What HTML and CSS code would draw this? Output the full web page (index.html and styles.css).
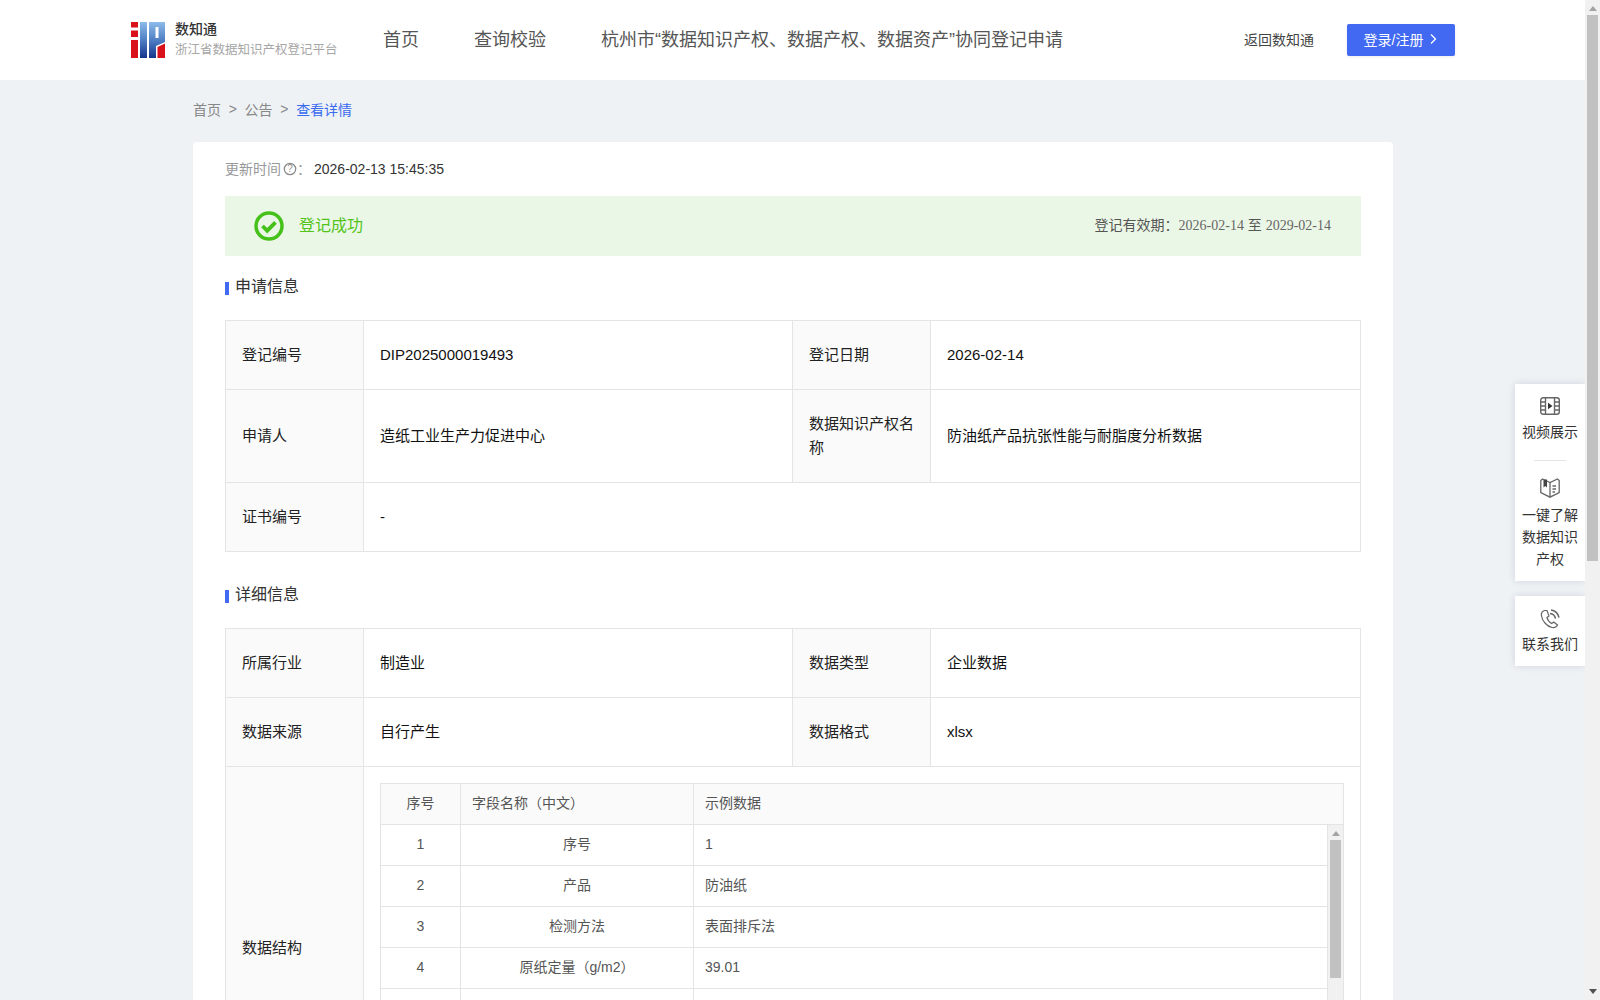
FILE: index.html
```html
<!DOCTYPE html>
<html lang="zh-CN">
<head>
<meta charset="utf-8">
<title>数知通</title>
<link rel="stylesheet" href="styles.css">
</head>
<body>
<div class="viewport">
  <header class="topbar">
    <div class="brand">
      <svg class="logo" viewBox="0 0 34 36" width="34" height="36">
        <defs><linearGradient id="lg" x1="0" y1="0" x2="0" y2="1"><stop offset="0" stop-color="#8dbbea"/><stop offset=".5" stop-color="#4f7fc4"/><stop offset="1" stop-color="#16348c"/></linearGradient></defs>
        <path fill="#d8111b" d="M0 0h7v5.500H0zM0 8.500h7v6.500H0zM0 18h7v18H0z"/>
        <path fill="url(#lg)" d="M9 0h7v36H9zM18 0h16v20l-9 4v12h-7z"/>
        <path fill="#fff" d="M24.500 5h3v11h-3z"/>
        <path fill="#d8111b" d="M26.500 25L34 21.500V36h-7.500z"/>
      </svg>
      <div class="brand-text">
        <div class="brand-name">数知通</div>
        <div class="brand-sub">浙江省数据知识产权登记平台</div>
      </div>
    </div>
    <nav class="nav">
      <a>首页</a>
      <a>查询校验</a>
      <a>杭州市“数据知识产权、数据产权、数据资产”协同登记申请</a>
    </nav>
    <a class="back">返回数知通</a>
    <button class="login"><span>登录/注册</span><svg viewBox="0 0 10 12" width="10" height="12"><path d="M3 1.500L7.500 6 3 10.500" fill="none" stroke="#fff" stroke-width="1.300"/></svg></button>
  </header>

  <main class="wrap">
    <div class="crumbs"><span>首页</span><i>&gt;</i><span>公告</span><i>&gt;</i><span class="cur">查看详情</span></div>
    <section class="card">
      <div class="updated">
        <span class="u-label">更新时间</span>
        <svg viewBox="0 0 14 14" width="14" height="14"><circle cx="7" cy="7" r="5.700" fill="none" stroke="#8c8c8c" stroke-width="1.300"/><text x="7" y="10.300" text-anchor="middle" class="q">?</text></svg>
        <span class="u-label">：</span>
        <span class="u-value">2026-02-13 15:45:35</span>
      </div>
      <div class="banner">
        <svg viewBox="0 0 30 30" width="30" height="30"><circle cx="15" cy="15" r="13" fill="none" stroke="#45c11a" stroke-width="3.500"/><path d="M8.500 15l4.700 4.700 8.300-8.300" fill="none" stroke="#45c11a" stroke-width="3.800"/></svg>
        <span class="ok">登记成功</span>
        <span class="valid">登记有效期：<em>2026-02-14</em> 至 <em>2029-02-14</em></span>
      </div>

      <h3 class="sec sec-a">申请信息</h3>
      <div class="grid">
        <div class="th">登记编号</div><div class="td">DIP2025000019493</div><div class="th">登记日期</div><div class="td">2026-02-14</div>
        <div class="th">申请人</div><div class="td">造纸工业生产力促进中心</div><div class="th">数据知识产权名称</div><div class="td">防油纸产品抗张性能与耐脂度分析数据</div>
        <div class="th">证书编号</div><div class="td wide">-</div>
      </div>

      <h3 class="sec sec-b">详细信息</h3>
      <div class="grid">
        <div class="th">所属行业</div><div class="td">制造业</div><div class="th">数据类型</div><div class="td">企业数据</div>
        <div class="th">数据来源</div><div class="td">自行产生</div><div class="th">数据格式</div><div class="td">xlsx</div>
        <div class="th tall">数据结构</div>
        <div class="td wide nest">
          <div class="inner">
            <div class="row head"><div class="c1">序号</div><div class="c2 left">字段名称（中文）</div><div class="c3">示例数据</div></div>
            <div class="inner-body">
              <div class="rows">
                <div class="row"><div class="c1">1</div><div class="c2">序号</div><div class="c3">1</div></div>
                <div class="row"><div class="c1">2</div><div class="c2">产品</div><div class="c3">防油纸</div></div>
                <div class="row"><div class="c1">3</div><div class="c2">检测方法</div><div class="c3">表面排斥法</div></div>
                <div class="row"><div class="c1">4</div><div class="c2">原纸定量（g/m2）</div><div class="c3">39.01</div></div>
                <div class="row"><div class="c1"></div><div class="c2"></div><div class="c3"></div></div>
                <div class="row"><div class="c1"></div><div class="c2"></div><div class="c3"></div></div>
              </div>
              <div class="bar bar-inner"><b class="up"></b><b class="thumb"></b></div>
            </div>
          </div>
        </div>
      </div>
    </section>
  </main>

  <aside class="float">
    <div class="float-box">
      <div class="f-item">
        <svg viewBox="0 0 20 18" width="20" height="18" fill="none" stroke="#666" stroke-width="1.400"><rect x=".7" y=".7" width="18.600" height="16.600" rx="2.500"/><path d="M5.500.7v16.600M14.500.7v16.600M.7 5h4.800M.7 9h4.800M.7 13h4.800M14.500 5h4.800M14.500 9h4.800M14.500 13h4.800"/><path d="M8 5.700l4.500 3.300L8 12.300z" fill="#333" stroke="none"/></svg>
        <span>视频展示</span>
      </div>
      <hr>
      <div class="f-item">
        <svg viewBox="0 0 20 20" width="20" height="20" fill="none" stroke="#666" stroke-width="1.300"><path d="M2.500 1l7.500 3.500L17.500 1l1.700 1.500V14.500L10 19.200.8 14.500V2.500z"/><path d="M10 4.500v14.700M12.500 8h3.500M12.500 11h3.500M12.500 14h2.500"/><path d="M3.500 1.500h3.500v8l-1.700-1.500-1.800 1.500z" fill="#444" stroke="none"/></svg>
        <span>一键了解数据知识产权</span>
      </div>
    </div>
    <div class="float-box">
      <div class="f-item contact">
        <svg viewBox="0 0 20 20" width="20" height="20" fill="none" stroke="#666" stroke-width="1.200"><path d="M4.500 1.500C2.200 2.200 1 4.500 1.500 7c.8 5 5.500 10.500 10.500 11.500 2.500.5 4.500-.5 5.500-2.500l-3.800-3-2 1.500c-2-1-4-3.500-4.800-6L9 7 7 1.500z"/><path d="M10 4.500c2.800.3 5 2.400 5.500 5.200M11 1c4 .3 7.300 3.500 8 7.500" stroke-width="1.500"/></svg>
        <span>联系我们</span>
      </div>
    </div>
  </aside>
</div>
<div class="bar bar-page"><b class="up"></b><b class="thumb"></b><b class="down"></b></div>
</body>
</html>
```

FILE: styles.css
```css
* { box-sizing: border-box; }
html, body { margin: 0; height: 100%; }
body {
  display: flex;
  overflow: hidden;
  background: #eef2f5;
  font-family: "Liberation Sans", "Noto Sans CJK SC", sans-serif;
  color: #333;
}
.viewport { flex: 1; min-width: 0; height: 1000px; overflow: hidden; position: relative; }

/* header */
.topbar {
  height: 80px;
  background: #fff;
  display: flex;
  align-items: center;
  padding: 0 130px 0 131px;
}
.brand { display: flex; align-items: center; gap: 10px; width: 252px; flex: none; }
.logo { display: block; flex: none; }
.brand-name { font-size: 14px; font-weight: 500; line-height: 20px; color: #333; margin-top: -2px; }
.brand-sub { font-size: 12.500px; line-height: 18px; color: #a6a6a6; white-space: nowrap; margin-top: 2px; }
.nav { display: flex; flex: 1; gap: 55px; font-size: 18px; color: #555; white-space: nowrap; padding-bottom: 4px; }
.back { font-size: 14px; color: #444; margin-right: 33px; white-space: nowrap; padding-bottom: 2px; }
.login {
  width: 108px;
  height: 32px;
  border: 0;
  border-radius: 2px;
  background: #4169f2;
  color: #fff;
  font: inherit;
  font-size: 14px;
  display: flex;
  align-items: center;
  justify-content: center;
  gap: 5px;
  padding: 0 0 3px;
  box-shadow: 0 1px 3px rgba(0, 0, 0, .08);
}

/* main */
.wrap { width: 1200px; margin-left: 193px; }
.crumbs {
  height: 62px;
  display: flex;
  align-items: center;
  font-size: 14px;
  color: #888;
  padding-bottom: 4px;
}
.crumbs i { font-style: normal; margin: 0 7.700px; }
.crumbs .cur { color: #3a6bf0; }
.card {
  background: #fff;
  border-radius: 4px;
  padding: 0 32px;
}
.updated { height: 54px; display: flex; align-items: center; font-size: 14px; }
.updated svg { margin: 0 0 0 2px; }
.q { font-size: 10px; fill: #8c8c8c; font-family: "Liberation Sans", sans-serif; }
.u-label { color: #999; padding-bottom: 2px; }
.u-value { color: #333; margin-left: 3px; }
.banner {
  height: 60px;
  background: #ebf7e6;
  display: flex;
  align-items: center;
  padding: 0 30px 0 29px;
  font-size: 14px;
}
.ok { color: #52c41a; font-size: 16px; margin-left: 15px; padding-bottom: 4px; }
.valid { margin-left: auto; color: #555; padding-bottom: 4px; }
.valid em { font-style: normal; font-family: "Liberation Serif", serif; color: #666; }
.sec {
  margin: 0;
  font-size: 16px;
  font-weight: 400;
  color: #333;
  line-height: 24px;
  display: flex;
  align-items: center;
  gap: 6px;
}
.sec::before { content: ""; width: 4px; height: 13px; background: #4169f2; margin-top: 2px; }
.sec-a { padding: 19px 0 21px; }
.sec-b { padding: 31px 0 21px; }

.grid {
  display: grid;
  grid-template-columns: 138px 429px 138px 1fr;
  border: 1px solid #e4e4e4;
  border-width: 1px 0 0 1px;
  font-size: 15px;
  line-height: 24px;
  color: #222;
}
.th, .td {
  padding: 22px 16px;
  border: 1px solid #e4e4e4;
  border-width: 0 1px 1px 0;
  display: flex;
  align-items: center;
}
.th { background: #fafafa; }
.td { color: #111; }
.wide { grid-column: span 3; }
.nest { padding: 16px 16px 0; display: block; height: 362px; overflow: hidden; }

/* nested table */
.inner { border: 1px solid #e4e4e4; font-size: 14px; color: #555; }
.row { display: grid; grid-template-columns: 80px 233px 1fr; height: 41px; border-bottom: 1px solid #e4e4e4; }
.head { background: #fafafa; }
.row > div {
  display: flex;
  align-items: center;
  padding: 0 11px 2px;
  border-right: 1px solid #e4e4e4;
}
.row > div:last-child { border-right: 0; }
.c1, .c2 { justify-content: center; }
.row > .left { justify-content: flex-start; }
.inner-body { display: flex; }
.rows { flex: 1; min-width: 0; border-right: 1px solid #e4e4e4; }

/* scrollbars */
.bar { background: #f1f1f1; flex: none; display: flex; flex-direction: column; align-items: center; }
.bar-inner { width: 15px; }
.bar-page { width: 15px; height: 1000px; position: relative; }
.bar .up { width: 0; height: 0; border: 4px solid transparent; border-top: 0; border-bottom: 5px solid #a3a3a3; margin-top: 6px; }
.bar .thumb { width: 11px; background: #c1c1c1; }
.bar-inner .thumb { height: 138px; margin-top: 4px; }
.bar-page .thumb { height: 546px; margin-top: 4px; }
.bar .down { width: 0; height: 0; border: 4px solid transparent; border-bottom: 0; border-top: 5px solid #505050; margin-top: auto; margin-bottom: 6px; }

/* floating tools */
.float { position: absolute; right: 0; top: 384px; width: 70px; display: flex; flex-direction: column; gap: 15px; }
.float-box { background: #fff; box-shadow: 0 0 8px rgba(0, 20, 60, .12); padding: 13px 0 11px; }
.float-box hr { width: 32px; height: 1px; margin: 17px auto; border: 0; background: #e4e4e4; }
.f-item { display: flex; flex-direction: column; align-items: center; text-align: center; font-size: 14px; line-height: 22px; color: #333; padding: 0 6px; }
.f-item svg { margin-bottom: 6px; flex: none; }
.contact svg { margin-bottom: 4px; }
```
